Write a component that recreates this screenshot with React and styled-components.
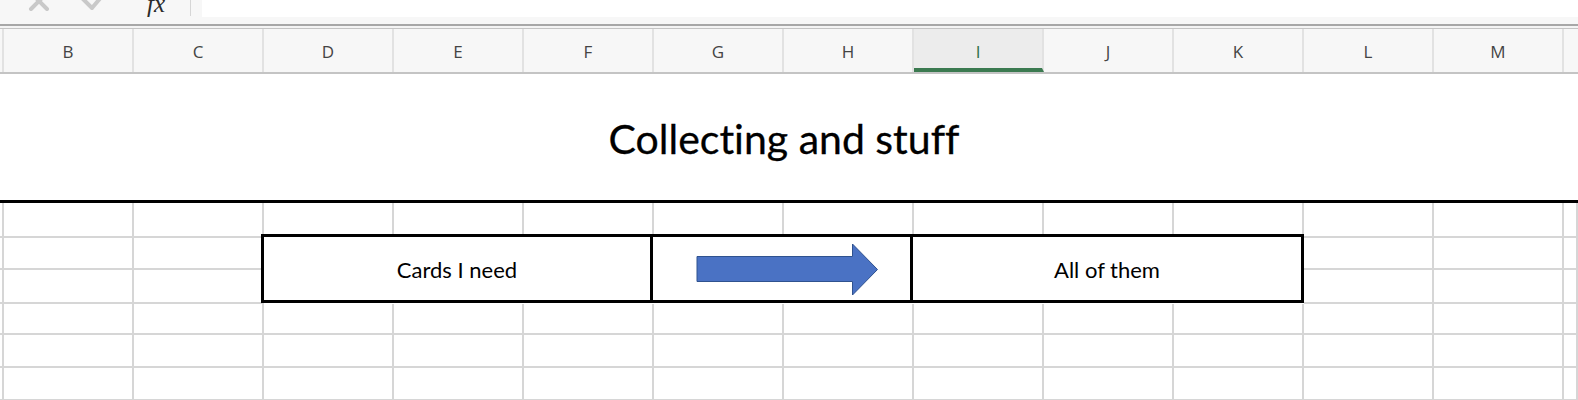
import React from 'react'
import styled, { createGlobalStyle } from 'styled-components'

const COLUMNS = ['B', 'C', 'D', 'E', 'F', 'G', 'H', 'I', 'J', 'K', 'L', 'M']
const SELECTED = 'I'
const ROW_HEIGHTS = [35, 32, 34, 31, 33, 33]

const GlobalStyle = createGlobalStyle`
  html, body {
    margin: 0;
    padding: 0;
    background: #ffffff;
    overflow: hidden;
  }
`

const SHEET_COLUMNS = '4px repeat(12, 130px) 1fr'

const App = () => (
  <Page>
    <GlobalStyle />

    <FormulaBar>
      <BarButton>
        <svg width='24' height='24' viewBox='0 0 24 24'>
          <path d='M4 4 L20 20 M20 4 L4 20' stroke='#c9c9c9' strokeWidth='4' strokeLinecap='round' fill='none' />
        </svg>
      </BarButton>
      <BarButton>
        <svg width='26' height='24' viewBox='0 0 26 24'>
          <path d='M3 10 L12 19 L23 6' stroke='#c9c9c9' strokeWidth='4' strokeLinecap='round' strokeLinejoin='round' fill='none' />
        </svg>
      </BarButton>
      <FxLabel>fx</FxLabel>
      <FormulaInput />
    </FormulaBar>
    <BarGap />

    <HeaderRow>
      <HeaderCell />
      {COLUMNS.map(col => (
        <HeaderCell key={col} selected={col === SELECTED}>{col}</HeaderCell>
      ))}
      <HeaderCell />
    </HeaderRow>

    <TitleBand>
      <Title>Collecting and stuff</Title>
    </TitleBand>

    <Grid>
      {ROW_HEIGHTS.map((h, r) => (
        [<Cell key={`a${r}`} />]
          .concat(COLUMNS.map(col => <Cell key={`${col}${r}`} />))
          .concat(<Cell key={`n${r}`} />)
      ))}

      <FlowBox>
        <FlowCell>Cards I need</FlowCell>
        <FlowCell divided>
          <Arrow width='183' height='53' viewBox='0 0 183 53'>
            <path
              d='M1 13.5 H156.5 V1 L181.5 26.5 L156.5 52 V38.5 H1 Z'
              fill='#4a72c4'
              stroke='#2f528f'
              strokeWidth='1'
            />
          </Arrow>
        </FlowCell>
        <FlowCell divided>All of them</FlowCell>
      </FlowBox>
    </Grid>
  </Page>
)

const Page = styled.div`
  display: flex;
  flex-direction: column;
  width: 1578px;
  height: 400px;
  overflow: hidden;
  background: #ffffff;

  & > * {
    flex-shrink: 0;
  }
`

const FormulaBar = styled.div`
  display: flex;
  align-items: flex-end;
  height: 24px;
  background: #f7f7f7;
  border-bottom: 2px solid #a7a7a7;
  overflow: hidden;
`

const BarButton = styled.div`
  display: flex;
  align-items: flex-end;
  justify-content: center;
  width: 54px;
  height: 24px;
  margin-bottom: 11px;

  &:first-child {
    margin-left: 12px;
  }
`

const FxLabel = styled.div`
  width: 55px;
  height: 24px;
  margin-left: 16px;
  padding-left: 11px;
  box-sizing: border-box;
  border-right: 1px solid #d6d6d6;
  align-self: flex-start;
  margin-top: -8px;
  font-family: 'Liberation Serif', serif;
  font-style: italic;
  font-size: 25px;
  line-height: 24px;
  color: #2b2b2b;
`

const FormulaInput = styled.div`
  flex: 1;
  align-self: flex-start;
  height: 17px;
  margin-left: 11px;
  background: #ffffff;
`

const BarGap = styled.div`
  height: 2px;
  background: #f4f4f4;
  border-bottom: 1px solid #c4c4c4;
`

const HeaderRow = styled.div`
  display: grid;
  grid-template-columns: ${SHEET_COLUMNS};
  height: 45px;
  background: #f7f7f7;
  border-bottom: 2px solid #c4c4c4;
  box-sizing: border-box;
`

const HeaderCell = styled.div`
  display: flex;
  align-items: center;
  justify-content: center;
  padding-top: ${p => (p.selected ? '6px' : '2px')};
  box-sizing: border-box;
  border-right: 2px solid #e2e2e2;
  background: ${p => (p.selected ? '#ececec' : 'transparent')};
  border-bottom: ${p => (p.selected ? '4px solid #3b7a50' : 'none')};
  font-family: 'Open Sans', 'Liberation Sans', sans-serif;
  font-size: 17px;
  color: ${p => (p.selected ? '#2f7049' : '#444444')};

  &:last-child {
    border-right: none;
  }
`

const TitleBand = styled.div`
  display: grid;
  grid-template-columns: ${SHEET_COLUMNS};
  height: 129px;
  box-sizing: border-box;
  border-bottom: 3px solid #000000;
`

const Title = styled.div`
  grid-column: 4 / 12;
  display: flex;
  align-items: center;
  justify-content: center;
  padding-top: 2px;
  font-family: Lato, 'Open Sans', sans-serif;
  font-size: 41px;
  font-variant-ligatures: none;
  -webkit-text-stroke: 0.3px #000000;
  color: #000000;
`

const Grid = styled.div`
  display: grid;
  grid-template-columns: ${SHEET_COLUMNS};
  grid-template-rows: ${ROW_HEIGHTS.map(h => `${h}px`).join(' ')};
`

const Cell = styled.div`
  box-sizing: border-box;
  border-right: 2px solid #d6d6d6;
  border-bottom: 2px solid #d6d6d6;
`

const FlowBox = styled.div`
  grid-column: 4 / 12;
  grid-row: 2 / 4;
  margin: -4px 0 1px -3px;
  z-index: 1;
  display: grid;
  grid-template-columns: 386px 260px 1fr;
  border: 3px solid #000000;
  background: #ffffff;
`

const FlowCell = styled.div`
  display: flex;
  align-items: center;
  justify-content: center;
  box-sizing: border-box;
  border-left: ${p => (p.divided ? '3px solid #000000' : 'none')};
  padding-top: 2px;
  font-family: Lato, 'Open Sans', sans-serif;
  font-size: 22px;
  font-variant-ligatures: none;
  color: #000000;
`

const Arrow = styled.svg`
  display: block;
  margin-left: 12px;
  margin-top: -1px;
`

export default App
